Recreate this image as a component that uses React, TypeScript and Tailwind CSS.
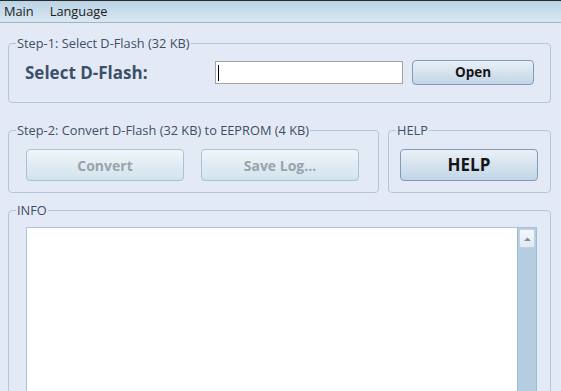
import React from 'react';

const font = { fontFamily: '"Open Sans", "Noto Sans", "Liberation Sans", sans-serif' };

function GroupBox({
  title,
  className,
  children,
}: {
  title: string;
  className?: string;
  children: React.ReactNode;
}) {
  return (
    <fieldset className={`border border-[#b3c6da] rounded-[4px] pl-[7px] pr-0 pb-0 pt-0 min-w-0 ${className ?? ''}`}>
      <legend className="px-px text-[12.8px] leading-[14px] text-[#3d4f66]">{title}</legend>
      {children}
    </fieldset>
  );
}

function AeroButton({
  label,
  disabled,
  className,
}: {
  label: string;
  disabled?: boolean;
  className?: string;
}) {
  return (
    <button
      type="button"
      className={`rounded-[4px] border font-bold flex items-center justify-center ${
        disabled
          ? 'border-[#a9c2d6] bg-gradient-to-b from-[#f0f5f9] to-[#d2e3ed] text-[#9aa3aa]'
          : 'border-[#7e9cb8] bg-gradient-to-b from-[#eaf0f6] to-[#c1d6e6] text-[#151515]'
      } ${className ?? ''}`}
    >
      {label}
    </button>
  );
}

export default function App() {
  return (
    <div style={font} className="w-[561px] h-[391px] bg-[#e4eaf5] overflow-hidden flex flex-col">
      {/* Barra de menu */}
      <div className="h-[23px] border-t border-[#2a2a2a] border-b border-b-[#a2b3c4] bg-gradient-to-b from-[#bad4e6] to-[#dae7f1] flex items-center text-[12.8px] text-[#1b1b1b]">
        <span className="ml-[4px]">Main</span>
        <span className="ml-[16px]">Language</span>
      </div>

      {/* Step-1 */}
      <GroupBox title="Step-1: Select D-Flash (32 KB)" className="ml-[8px] mr-[10px] mt-[13px] h-[67px]">
        <div className="flex items-center h-[45px] ml-[9px]">
          <span className="text-[17px] font-bold text-[#3b5169] w-[190px]">Select D-Flash:</span>
          <div className="w-[188px] h-[23px] border border-[#a3a3a3] bg-white flex items-center pl-[2px]">
            <div className="w-px h-[16px] bg-black" />
          </div>
          <AeroButton label="Open" className="ml-[9px] w-[122px] h-[25px] text-[13.5px]" />
        </div>
      </GroupBox>

      {/* Step-2 + HELP */}
      <div className="flex ml-[8px] mr-[10px] mt-[20px] gap-[9px]">
        <GroupBox title="Step-2: Convert D-Flash (32 KB) to EEPROM (4 KB)" className="w-[371px] h-[70px]">
          <div className="flex gap-[17px] ml-[10px] mt-[12px]">
            <AeroButton label="Convert" disabled className="w-[158px] h-[32px] text-[14px]" />
            <AeroButton label="Save Log..." disabled className="w-[158px] h-[32px] text-[14px]" />
          </div>
        </GroupBox>
        <GroupBox title="HELP" className="flex-1 h-[70px]">
          <div className="ml-[4px] mt-[12px]">
            <AeroButton label="HELP" className="w-[138px] h-[32px] text-[17px]" />
          </div>
        </GroupBox>
      </div>

      {/* INFO */}
      <GroupBox title="INFO" className="ml-[8px] mr-[10px] mt-[10px] flex-1 -mb-[10px]">
        <div className="ml-[10px] mr-[13px] mt-[10px] h-full border-t border-l border-[#a9c4dc] bg-white flex">
          <div className="flex-1" />
          <div className="w-[20px] bg-[#b5cde0] border-l border-r border-[#9fbdd6] flex flex-col">
            <div className="h-[19px] mx-px mt-px rounded-[2px] border border-[#c2d2e0] bg-gradient-to-b from-[#f5f8fb] to-[#e1eaf2] flex items-center justify-center">
              <svg width="7" height="4" viewBox="0 0 7 4">
                <path d="M0 4 L3.5 0.5 L7 4 Z" fill="#7d8ea0" />
              </svg>
            </div>
          </div>
        </div>
      </GroupBox>
    </div>
  );
}
